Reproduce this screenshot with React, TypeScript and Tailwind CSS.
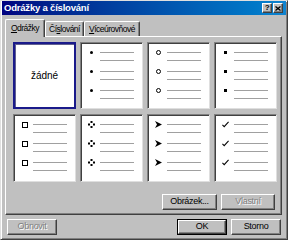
import React from 'react';

const raised =
  'border border-t-white border-l-white border-r-[#404040] border-b-[#404040] shadow-[inset_-1px_-1px_0_#808080]';

const Line = () => <div className="h-[1px] w-[34px] bg-[#a0a0a0]" />;

const Dot = () => <div className="w-[3px] h-[3px] rounded-full bg-black" />;
const Ring = () => <div className="w-[5px] h-[5px] rounded-full border border-black" />;
const Square = () => <div className="w-[3px] h-[3px] bg-black" />;
const Box = () => <div className="w-[6px] h-[6px] border border-black" />;
const Diamonds = () => (
  <svg width="7" height="7" viewBox="0 0 7 7">
    <rect x="2.5" y="0" width="2" height="2" fill="#000" />
    <rect x="2.5" y="5" width="2" height="2" fill="#000" />
    <rect x="0" y="2.5" width="2" height="2" fill="#000" />
    <rect x="5" y="2.5" width="2" height="2" fill="#000" />
  </svg>
);
const Arrow = () => (
  <svg width="7" height="7" viewBox="0 0 7 7">
    <path d="M0 0 L7 3.5 L0 7 L2 3.5 Z" fill="#000" />
  </svg>
);
const Check = () => (
  <svg width="8" height="7" viewBox="0 0 8 7">
    <path d="M0.5 4 L2.5 6 L7.5 0.5" stroke="#000" strokeWidth="1.2" fill="none" />
  </svg>
);

const BulletCell = ({ bullet }: { bullet: React.ReactNode }) => (
  <div className="bg-white border border-t-[#808080] border-l-[#808080] border-r-[#dfdfdf] border-b-[#dfdfdf] shadow-[inset_1px_1px_0_#404040] pt-[6px]">
    {[0, 1, 2].map((i) => (
      <div key={i} className="flex h-[19px]">
        <div className="ml-[7px] w-[7px] h-[7px] flex items-center justify-center">{bullet}</div>
        <div className="ml-[5px] pt-[3px] flex flex-col">
          <Line />
          <div className="mt-[7px]">
            <Line />
          </div>
        </div>
      </div>
    ))}
  </div>
);

const Btn = ({
  label,
  disabled,
  def,
  w = 'w-[50px]',
}: {
  label: React.ReactNode;
  disabled?: boolean;
  def?: boolean;
  w?: string;
}) => (
  <div className={`${w} h-[16px] ${def ? 'border border-black' : ''}`}>
    <div
      className={`h-full ${raised} flex items-center justify-center ${
        disabled ? 'text-[#808080] [text-shadow:1px_1px_0_#fff]' : 'text-black'
      }`}
    >
      {label}
    </div>
  </div>
);

export default function App() {
  return (
    <div
      className="w-[288px] h-[240px] bg-[#c0c0c0] border border-t-[#dfdfdf] border-l-[#dfdfdf] border-r-[#404040] border-b-[#404040] shadow-[inset_1px_1px_0_#fff,inset_-1px_-1px_0_#808080] px-[1px] flex flex-col text-[9px] tracking-[-0.3px] text-black overflow-hidden"
      style={{ fontFamily: '"Liberation Sans", Arial, sans-serif' }}
    >
      {/* title bar */}
      <div className="h-[14px] bg-gradient-to-r from-[#000080] to-[#1084d0] flex items-center pl-[2px] pr-[3px]">
        <span className="text-white font-bold text-[9.5px] tracking-[-0.2px]">Odrážky a číslování</span>
        <div className="ml-auto flex gap-[1px]">
          <div className={`w-[10px] h-[10px] bg-[#c0c0c0] ${raised} flex items-center justify-center text-[8px] font-bold leading-none`}>
            ?
          </div>
          <div className={`w-[10px] h-[10px] bg-[#c0c0c0] ${raised} flex items-center justify-center`}>
            <svg width="6" height="5" viewBox="0 0 6 5">
              <path d="M0.5 0.5 L5.5 4.5 M5.5 0.5 L0.5 4.5" stroke="#000" strokeWidth="1.3" />
            </svg>
          </div>
        </div>
      </div>

      {/* tabs */}
      <div className="ml-[3px] mt-[3px] flex items-end h-[18px] relative z-10 text-[8.5px] tracking-[-0.5px]">
        <div className="w-[40px] h-[18px] border-t border-l border-t-white border-l-white border-r border-r-[#404040] shadow-[inset_-1px_0_0_#808080] bg-[#c0c0c0] rounded-t-[2px] flex items-center justify-center pb-[1px] mb-[-1px]">
          <span>
            <span className="underline">O</span>drážky
          </span>
        </div>
        <div className="w-[39px] h-[15px] border-t border-t-white border-l border-l-white border-r border-r-[#404040] shadow-[inset_-1px_0_0_#808080] rounded-t-[2px] flex items-center justify-center">
          <span>
            Čí<span className="underline">s</span>lování
          </span>
        </div>
        <div className="w-[56px] h-[15px] border-t border-t-white border-l border-l-white border-r border-r-[#404040] shadow-[inset_-1px_0_0_#808080] rounded-t-[2px] flex items-center justify-center">
          <span>
            <span className="underline">V</span>íceúrovňové
          </span>
        </div>
      </div>

      {/* panel */}
      <div className={`ml-[3px] w-[277px] h-[179px] ${raised} flex flex-col pt-[5px] pl-[7px]`}>
        <div className="w-[264px] grid grid-cols-4 grid-rows-[67px_68px] gap-x-[4px] gap-y-[5px]">
          <div className="bg-white border-2 border-[#1a1a8a] shadow-[inset_1px_1px_0_#606090] flex items-center justify-center text-[10px] tracking-normal">
            žádné
          </div>
          <BulletCell bullet={<Dot />} />
          <BulletCell bullet={<Ring />} />
          <BulletCell bullet={<Square />} />
          <BulletCell bullet={<Box />} />
          <BulletCell bullet={<Diamonds />} />
          <BulletCell bullet={<Arrow />} />
          <BulletCell bullet={<Check />} />
        </div>
        <div className="mt-[12px] flex justify-end gap-[4px] pr-[6px]">
          <Btn label="Obrázek..." w="w-[55px]" />
          <Btn label="Vlastní" disabled w="w-[54px]" />
        </div>
      </div>

      {/* bottom buttons */}
      <div className="mt-[4px] flex pl-[5px] pr-[5px]">
        <Btn label="Obnovit" disabled />
        <div className="ml-auto flex gap-[4px]">
          <Btn label="OK" def />
          <Btn label="Storno" />
        </div>
      </div>
    </div>
  );
}
